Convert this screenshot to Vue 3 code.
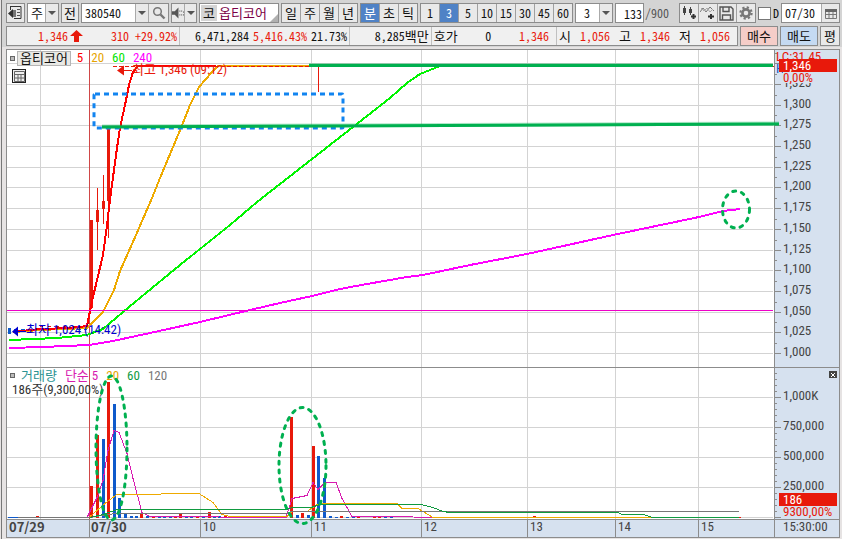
<script setup>
import { ref } from 'vue'

const periods = ['일', '주', '월', '년']
const units = ['분', '초', '틱']
const minutes = ['1', '3', '5', '10', '15', '30', '45', '60']
const unit = ref('분')
const minute = ref('3')
const code = ref('380540')
const count = ref('133')
const date = ref('07/30')
const drawMode = ref(false)

// Plot coordinates: one unit is one pixel of the default window.
const X0 = 7
const PLOT_W = 767
const PRICE_TOP = 50
const PRICE_H = 317
const VOL_TOP = 368
const VOL_H = 151

const hours = [
  { x: 40, label: '' },
  { x: 200, label: '10' },
  { x: 311, label: '11' },
  { x: 421, label: '12' },
  { x: 527, label: '13' },
  { x: 615, label: '14' },
  { x: 698, label: '15' }
]
const priceTicks = [
  [63, ''], [84, '1,325'], [105, '1,300'], [125, '1,275'], [146, '1,250'],
  [167, '1,225'], [187, '1,200'], [208, '1,175'], [229, '1,150'], [250, '1,125'],
  [270, '1,100'], [291, '1,075'], [312, '1,050'], [332, '1,025'], [353, '1,000']
].map(([y, label]) => ({ y, label }))
const volTicks = [
  [397, '1,000K'], [427, '750,000'], [457, '500,000'], [487, '250,000'], [517, '']
].map(([y, label]) => ({ y, label }))
const volMinor = Array.from({ length: 24 }, (_, i) => 373 + i * 6)

const priceLines = [
  { c: '#ff00ff', w: 2, p: '9,348 43,347 89,345 113,341 150,333 200,322 250,310 280,303 312,296 340,289 367,284 407,277 423,275 470,265 527,254 613,235 699,217 723,211 740,209' },
  { c: '#00f400', w: 2, p: '9,340 57,338 87,335 103,329 123,312 152,288 180,265 200,249 230,225 257,202 312,159 353,127 390,98 407,83 420,74 440,66' },
  { c: '#eeaa00', w: 2, p: '13,332 40,330 87,328 90,325 103,312 114,290 120,271 136,235 152,198 160,178 173,147 183,123 190,105 199,87 212,72 218,66 312,66' },
  { c: '#ff0000', w: 2, p: '13,332 40,329 70,328 87,326 90,311 93,297 103,255 107,225 111,192 117,148 120,128 125,105 129,85 133,72 138,66 216,66' }
]
const candles = [
  { x: 90, top: 220, bottom: 308, high: 220, low: 308 },
  { x: 96, top: 210, bottom: 222, high: 188, low: 250 },
  { x: 102, top: 201, bottom: 209, high: 175, low: 224 },
  { x: 107, top: 128, bottom: 201, high: 128, low: 238 }
]
const UP = '#e8190b'
const DOWN = '#0f5acb'
const bars = [
  [36, 516, UP], [90, 486, UP], [96, 435, UP], [102, 439, DOWN], [107, 382, UP], [113, 404, DOWN],
  [118, 498, DOWN], [124, 514, DOWN], [130, 516, DOWN], [135, 516, DOWN], [140, 514, UP],
  [146, 516, DOWN], [152, 516, UP], [158, 516, DOWN], [163, 516, DOWN], [169, 516, DOWN],
  [174, 516, UP], [179, 514, UP], [185, 516, DOWN], [190, 516, DOWN], [196, 516, UP],
  [202, 516, DOWN], [208, 512, UP], [213, 516, DOWN], [218, 516, DOWN], [224, 516, UP],
  [290, 417, UP], [296, 515, DOWN], [301, 513, UP], [307, 515, DOWN], [312, 446, UP],
  [317, 456, DOWN], [323, 478, DOWN], [329, 516, DOWN], [335, 517, DOWN], [340, 516, UP],
  [346, 517, DOWN], [352, 517, DOWN], [357, 516, UP], [373, 516, UP], [378, 516, UP],
  [384, 516, DOWN], [390, 517, DOWN], [533, 516, UP]
].map(([x, y, c]) => ({ x, y, c }))
const volLines = [
  { c: '#d81bb0', p: '87,517 97,497 103,480 108,450 114,430 119,432 127,453 133,478 142,512 150,516 286,517 292,498 307,495 313,482 318,489 325,482 336,482 342,498 352,516 393,516 433,517' },
  { c: '#eeaa00', p: '90,516 105,503 117,494 160,494 162,493 199,493 213,502 222,514 230,516 287,516 292,511 307,511 317,504 325,503 397,503 402,508 418,508 433,517 655,517' },
  { c: '#777777', p: '8,517 90,517 115,513 285,513 292,511 739,511' },
  { c: '#0f9a3f', p: '90,517 103,514 117,509 287,509 292,507 311,507 320,504 421,504 433,507 443,511 450,512 618,512 622,514 643,514 653,517 740,517' }
]

const pct = (v, start, size) => ((v - start) / size) * 100 + '%'
const priceY = y => ({ top: pct(y, PRICE_TOP, PRICE_H) })
const volY = y => ({ top: pct(y, VOL_TOP, VOL_H) })
const timeX = x => ({ left: pct(x, X0, PLOT_W) })
</script>

<template>
  <div class="app">
    <header class="toolbar">
      <button class="btn fold" aria-label="패널 접기">
        <svg width="15" height="14" viewBox="0 0 15 14">
          <path d="M2 .5h11v12H6M2.500 1v3" fill="none" stroke="#333" />
          <path d="M9 3h3v1H9zM9 6h3v1H9zM9 9h3v1H9z" fill="#555" />
          <path d="M5 3v9L0 7.500z" fill="#333" /><path d="M5 4h3v7H5z" fill="#777" />
        </svg>
      </button>
      <div class="combo kind">
        <select aria-label="종목 구분"><option>주</option></select><i class="caret"></i>
      </div>
      <button class="btn">전</button>
      <div class="combo code">
        <input v-model="code" class="num" aria-label="종목코드" />
        <button class="caret" aria-label="종목코드 목록"></button>
        <button class="find" aria-label="종목 검색">
          <svg width="14" height="14" viewBox="0 0 14 14" fill="none" stroke="#777">
            <circle cx="5.500" cy="5.500" r="3.800" stroke-width="1.500" /><path d="M8.500 8.500l4 4" stroke-width="2.400" />
          </svg>
        </button>
      </div>
      <div class="combo sound">
        <button aria-label="음성">
          <svg width="12" height="12" viewBox="0 0 13 12">
            <path d="M0 4h3l4-4v12L3 8H0z" fill="#555" />
            <path d="M8 3h1v2H8zM8 7h1v2H8zM10 3h1v2h-1zM10 7h1v2h-1zM12 4h1v2h-1zM12 7h1v2h-1z" fill="#888" />
          </svg>
        </button>
        <button class="caret" aria-label="음성 설정"></button>
      </div>
      <div class="stock"><span class="market">코</span><span>옵티코어</span></div>
      <div class="group">
        <button v-for="p in periods" :key="p">{{ p }}</button>
      </div>
      <div class="group">
        <button v-for="u in units" :key="u" :class="{ on: unit === u }" @click="unit = u">{{ u }}</button>
      </div>
      <div class="group num">
        <button v-for="m in minutes" :key="m" :class="{ on: minute === m }" @click="minute = m">{{ m }}</button>
      </div>
      <div class="combo step">
        <select class="num" aria-label="분 간격"><option>3</option></select><i class="caret"></i>
      </div>
      <div class="count num">
        <input v-model="count" aria-label="조회 개수" /><span>/900</span>
      </div>
      <div class="group tools">
        <button aria-label="종목 추가">
          <svg width="16" height="14" viewBox="0 0 16 14">
            <path d="M3.500 0v9M9.500 1v8" stroke="#444" /><path d="M2 2h3v5H2zM8 3h3v4H8z" fill="#444" />
            <path d="M10 10.500h5M12.500 8v5" stroke="#333" stroke-width="2" />
          </svg>
        </button>
        <button aria-label="지표 추가">
          <svg width="16" height="14" viewBox="0 0 16 14" fill="none">
            <path d="M0 6l3-4 3 4 4-5 4 4" stroke="#777" /><path d="M1 2l3 3 3-3 3 4 3-3" stroke="#aaa" />
            <path d="M8 10.500h6M11 8v5" stroke="#333" stroke-width="2" />
          </svg>
        </button>
        <button aria-label="저장">
          <svg width="15" height="15" viewBox="0 0 15 15" fill="none" stroke="#555" stroke-width="1.400">
            <path d="M1 1h11l2 2v11H1zM4 1v4.500h6V1M3.500 14V9h8v5" />
          </svg>
        </button>
        <button aria-label="설정">
          <svg width="14" height="14" viewBox="0 0 14 14" fill="none" stroke="#777">
            <circle cx="7" cy="7" r="3.600" stroke-width="2.600" />
            <circle cx="7" cy="7" r="5.600" stroke-width="2.200" stroke-dasharray="2.200 2.200" />
          </svg>
        </button>
      </div>
      <label class="day num"><input v-model="drawMode" type="checkbox" />D</label>
      <div class="combo date">
        <input v-model="date" class="num" aria-label="날짜" />
        <button aria-label="달력">
          <svg width="12" height="11" viewBox="0 0 12 11">
            <path d="M.5 2v8.500h11V2M.5 6.500h11M4 4v6M8 4v6" fill="none" stroke="#777" />
            <path d="M0 1h12v3H0z" fill="#666" />
          </svg>
        </button>
      </div>
    </header>

    <section class="quote">
      <div class="cells num">
        <div class="cell up">
          <span>1,346</span>
          <svg class="arrow" width="13" height="12" viewBox="0 0 13 12"><path d="M6.500 0L13 6H9v6H4V6H0z" fill="#e8190b" /></svg>
          <span class="diff">310</span><span class="rate">+29.92%</span>
        </div>
        <div class="cell"><span>6,471,284</span><span class="up">5,416.43%</span><span>21.73%</span></div>
        <div class="cell"><span>8,285<b>백만</b></span></div>
        <div class="cell spread"><b>호가</b><span>0</span><span class="up">1,346</span></div>
        <div class="cell spread">
          <b>시</b><span class="up">1,056</span><b>고</b><span class="up">1,346</span><b>저</b><span class="up">1,056</span>
        </div>
      </div>
      <button class="trade buy">매수</button>
      <button class="trade sell">매도</button>
      <button class="trade avg">평</button>
    </section>

    <main class="chart">
      <section class="pane price">
        <svg class="plot" :viewBox="`${X0} ${PRICE_TOP} ${PLOT_W} ${PRICE_H}`" preserveAspectRatio="none">
          <g fill="#d3d3d3">
            <rect v-for="t in priceTicks" :key="t.y" x="7" :y="t.y" width="766" height="1" />
            <rect v-for="h in hours" :key="h.x" :x="h.x" y="50" width="1" height="317" />
          </g>
          <rect x="89" y="50" width="1" height="317" fill="#d04848" />
          <g fill="#e8190b">
            <template v-for="c in candles" :key="c.x">
              <rect :x="c.x" :y="c.top" width="3" :height="c.bottom - c.top" />
              <rect :x="c.x + 1" :y="c.high" width="1" :height="c.low - c.high" />
            </template>
            <rect x="318" y="66" width="1" height="26" />
          </g>
          <g shape-rendering="crispEdges" fill="none">
            <path d="M14 329.500H87" stroke="#0f5acb" stroke-dasharray="4 3" />
            <path d="M40 326.500H87" stroke="#e8190b" stroke-dasharray="3 5" />
            <polyline v-for="l in priceLines" :key="l.c" :points="l.p" :stroke="l.c" :stroke-width="l.w" />
            <path d="M113 66.500H774" stroke="#e8190b" stroke-dasharray="4 2" />
            <path d="M7 310.500H773" stroke="#ee00c8" />
          </g>
          <path d="M8 328h3v6H8z" fill="#0f5acb" />
          <path d="M117 70.500l7-5v10zM124 70h8v1h-8z" fill="#e8190b" />
          <path d="M12 331.500l6-5v10zM18 331h8v1h-8z" fill="#0000d0" />
        </svg>
        <div class="legend">
          <i class="dot"></i><button class="title">옵티코어</button>
          <span class="c5">5</span><span class="c20">20</span><span class="c60">60</span><span class="c240">240</span>
        </div>
        <button class="grid-btn" aria-label="표 보기">
          <svg width="11" height="11" viewBox="0 0 11 11" fill="none" stroke="#666"><path d="M.5.5h10v10H.5zM.5 3.500h10M.5 7h10M4 3v8M7 3v8" /></svg>
        </button>
        <span class="mark high" :style="{ ...priceY(70), ...timeX(132) }">최고 1,346 (09:12)</span>
        <span class="mark low" :style="{ ...priceY(330), ...timeX(26) }">최저 1,024 (14:42)</span>
      </section>

      <aside class="axis">
        <svg class="plot" :viewBox="`775 ${PRICE_TOP} 64 ${PRICE_H}`" preserveAspectRatio="none" fill="#8c8c8c">
          <template v-for="t in priceTicks" :key="t.y">
            <rect x="775" :y="t.y" width="6" height="1" /><rect x="775" :y="t.y - 10" width="2" height="1" />
          </template>
        </svg>
        <span class="tick up edge" :style="priceY(57)">LC:31.45</span>
        <span class="tick limit edge" :style="priceY(69)">H</span>
        <span v-for="t in priceTicks" :key="t.y" class="tick" :style="priceY(t.y - 1)">{{ t.label }}</span>
        <span class="tick up change" :style="priceY(78)">0,00%</span>
        <span class="now" :style="priceY(66)">1,346</span>
      </aside>

      <section class="pane volume">
        <svg class="plot" :viewBox="`${X0} ${VOL_TOP} ${PLOT_W} ${VOL_H}`" preserveAspectRatio="none">
          <g fill="#d3d3d3">
            <rect v-for="t in volTicks" :key="t.y" x="7" :y="t.y" width="766" height="1" />
            <rect v-for="h in hours" :key="h.x" :x="h.x" y="368" width="1" height="151" />
          </g>
          <rect x="89" y="368" width="1" height="151" fill="#d04848" />
          <rect v-for="b in bars" :key="b.x" :x="b.x" :y="b.y" width="3" :height="518 - b.y" :fill="b.c" />
          <g shape-rendering="crispEdges" fill="none" transform="translate(0 .5)">
            <polyline v-for="l in volLines" :key="l.c" :points="l.p" :stroke="l.c" />
            <path d="M8 517H18" stroke="#0f5acb" />
            <path d="M739 517H741" stroke="#e8190b" />
          </g>
        </svg>
        <div class="legend">
          <i class="dot"></i><span class="vol">거래량</span>
          <span class="m5">단순 5</span><span class="c20">20</span><span class="m60">60</span><span class="m120">120</span>
        </div>
        <p class="volume-now">186주(9,300,00%)</p>
      </section>

      <aside class="axis lower">
        <svg class="plot" :viewBox="`775 ${VOL_TOP} 64 ${VOL_H}`" preserveAspectRatio="none" fill="#8c8c8c">
          <rect v-for="t in volTicks" :key="t.y" x="775" :y="t.y" width="6" height="1" />
          <rect v-for="y in volMinor" :key="y" x="775" :y="y" width="2" height="1" />
        </svg>
        <span v-for="t in volTicks" :key="t.y" class="tick" :style="volY(t.y - 1)">{{ t.label }}</span>
        <span class="tick up" :style="volY(512)">9300,00%</span>
        <span class="now" :style="volY(500)">186</span>
        <button class="close" aria-label="닫기">
          <svg width="4" height="4" viewBox="0 0 4 4" stroke="#fff"><path d="M0 0l4 4M4 0L0 4" /></svg>
        </button>
      </aside>

      <footer class="times">
        <span class="time day-start first" :style="timeX(7)">07/29</span>
        <span class="time day-start" :style="timeX(89)">07/30</span>
        <span v-for="h in hours.slice(1)" :key="h.x" class="time" :style="timeX(h.x)">{{ h.label }}</span>
      </footer>
      <div class="clock">15:30:00</div>

      <svg class="notes" viewBox="7 50 832 487" preserveAspectRatio="none" fill="none">
        <path d="M309 65H773M102 126.500L779 123.500" stroke="#00b050" stroke-opacity=".3" stroke-width="4" />
        <rect x="94" y="94" width="249" height="34" stroke="#1184f0" stroke-width="3" stroke-dasharray="5 4" rx="1" />
        <path d="M309 65.500H773M102 127L779 124" stroke="#00b050" stroke-width="3" />
        <g stroke="#00b050" stroke-width="3" stroke-linecap="round" stroke-dasharray="3 6">
          <ellipse cx="111.500" cy="448" rx="15.500" ry="72" />
          <ellipse cx="302.500" cy="465.500" rx="23.500" ry="58" />
          <ellipse cx="736" cy="209.500" rx="13.500" ry="18.500" />
        </g>
      </svg>
    </main>
  </div>
</template>

<style>
body {
  margin: 0;
  background: #e6e3e3;
}
</style>

<style scoped>
.app {
  --line: #8c8c8c;
  --up: #e8190b;
  --axis: #d6e1ef;
  box-sizing: border-box;
  display: flex;
  flex-direction: column;
  gap: 3px;
  height: 100vh;
  min-height: 420px;
  min-width: 840px;
  margin-left: 1px;
  padding: 3px 2px 1px 4px;
  border-left: 1px solid #777;
  background: linear-gradient(#d4d4d4 47px, #e6e3e3 47px);
  font-family: 'Noto Sans CJK KR', sans-serif;
  font-size: 13px;
  line-height: 18px;
  color: #111;
}
.app *,
.app *::before,
.app *::after {
  box-sizing: border-box;
}
button,
input,
select {
  margin: 0;
  padding: 0;
  border: 0;
  border-radius: 0;
  background: none;
  font: inherit;
  color: inherit;
  outline: none;
}
svg {
  display: block;
}
b {
  font-size: 13px;
  font-weight: 400;
}
.num {
  font-size: 12px;
  font-feature-settings: 'hwid';
}
.up {
  color: var(--up);
}

/* toolbar */
.toolbar {
  display: flex;
  gap: 2px;
  height: 20px;
}
.btn,
.combo,
.group,
.stock {
  display: flex;
  flex: none;
  height: 20px;
  border: 1px solid var(--line);
  background: #e9e9e9;
}
.btn {
  width: 18px;
  align-items: center;
  justify-content: center;
}
.fold { width: 19px; }
.combo input,
.combo select {
  flex: 1;
  min-width: 0;
  padding-left: 3px;
  background: #fff;
  appearance: none;
}
.combo button {
  display: flex;
  align-items: center;
  justify-content: center;
  border-left: 1px solid #aaa;
}
.combo button:first-child {
  flex: 1;
  border-left: 0;
}
.caret {
  position: relative;
  flex: none;
  width: 13px;
  border-left: 1px solid #aaa;
}
.caret::after {
  content: '';
  position: absolute;
  top: 7px;
  left: 2px;
  border: 4px solid transparent;
  border-top-color: #555;
  border-bottom: 0;
}
.kind { width: 32px; }
.code { width: 88px; }
.find { width: 20px; }
.sound { width: 26px; }
.step { width: 38px; }
.step select { padding-left: 8px; }
.date { width: 59px; }
.date button { width: 18px; }
.stock {
  position: relative;
  gap: 2px;
  width: 80px;
  padding: 1px;
  background: #fff;
  color: #7a0046;
  line-height: 16px;
}
.stock::after {
  content: '';
  position: absolute;
  right: 0;
  bottom: 0;
  border: 4px solid #b0b0b0;
  border-top-color: transparent;
  border-left-color: transparent;
}
.market {
  width: 16px;
  background: #d4d4d4;
  color: #111;
  text-align: center;
}
.group button {
  display: flex;
  align-items: center;
  justify-content: center;
  width: 19px;
  border-left: 1px solid #a0a0a0;
}
.group button:first-child {
  width: 18px;
  border-left: 0;
}
.group .on {
  background: #4f82c6;
  color: #fff;
}
.count {
  display: flex;
  flex: 1;
}
.count input {
  width: 29px;
  height: 20px;
  padding-right: 1px;
  border: 1px solid var(--line);
  background: #fff;
  text-align: right;
}
.count span {
  padding: 1px;
  color: #555;
}
.day {
  display: flex;
  align-items: center;
  gap: 2px;
}
.day input {
  width: 13px;
  height: 13px;
  border: 1px solid #777;
  background: #fff;
  appearance: none;
}
.day input:checked {
  background: #4f82c6;
}

/* quote strip */
.quote {
  display: flex;
  gap: 2px;
  height: 20px;
}
.cells {
  display: grid;
  flex: 1;
  grid-template-columns: 173fr 171fr 82fr 126fr 182fr;
  border: 1px solid var(--line);
  background: #f0f0f0;
}
.cell {
  display: flex;
  align-items: center;
  justify-content: flex-end;
  gap: 4px;
  min-width: 0;
  padding-right: 2px;
  border-left: 1px solid #c0c0c0;
  white-space: nowrap;
}
.cell:first-child {
  gap: 2px;
  border-left: 0;
}
.diff { margin-left: 26px; }
.rate { margin-left: 4px; }
.spread {
  justify-content: space-between;
  padding: 0 7px 0 2px;
}
.trade {
  width: 38px;
  border: 1px solid var(--line);
  background: #e9e9e9;
}
.buy { background: #f5cdc8; }
.sell { background: #c5daf2; }
.avg { width: 20px; }

/* chart */
.chart {
  position: relative;
  display: grid;
  flex: 1;
  grid-template: minmax(0, 317fr) minmax(0, 152fr) minmax(0, 18fr) / minmax(0, 767fr) minmax(0, 65fr);
  border: 1px solid var(--line);
  background: #fff;
  font-family: 'Roboto Condensed', 'Noto Sans CJK KR', sans-serif;
  line-height: 14px;
}
.pane,
.axis {
  position: relative;
  overflow: hidden;
}
.volume,
.lower {
  border-top: 1px solid var(--line);
}
.axis,
.clock {
  border-left: 1px solid var(--line);
  background: var(--axis);
  color: #444;
}
.plot,
.notes {
  position: absolute;
  inset: 0;
  width: 100%;
  height: 100%;
}
.notes {
  pointer-events: none;
}
.legend {
  position: relative;
  display: flex;
  align-items: center;
  gap: 8px;
  height: 16px;
  padding: 1px 3px;
}
.dot {
  width: 5px;
  height: 5px;
  border: 1px solid #666;
  background: #bbb;
}
.title {
  height: 15px;
  margin: 0 -2px 0 -6px;
  padding: 0 2px;
  border: 1px solid #b5b5b5;
  background: #e9e9e5;
}
.c5 { color: #f00; }
.c20 { color: #e6a400; }
.c60 { color: #00e400; }
.c240 { color: #f0f; }
.vol { margin-left: -2px; color: #2a9393; }
.m5 { color: #d81bb0; }
.m60 { color: #0f9a3f; }
.m120 { color: #777; }
.volume .legend { height: 15px; }
.volume-now {
  position: relative;
  margin: 0;
  padding-left: 5px;
  color: #333;
}
.grid-btn {
  position: relative;
  display: grid;
  place-items: center;
  width: 14px;
  height: 14px;
  margin: 3px 5px;
  border: 1px solid #222;
  background: #eee;
}
.mark,
.tick,
.now {
  position: absolute;
  height: 14px;
  margin-top: -7px;
  white-space: nowrap;
}
.high { color: var(--up); }
.low { color: #0000d0; }
.tick { left: 8px; }
.edge { left: 1px; }
.tick.up { color: var(--up); }
.tick.limit { color: #0f5acb; }
.change {
  height: 12px;
  padding-right: 8px;
  background: var(--axis);
}
.now {
  left: 4px;
  right: 2px;
  height: 13px;
  padding-left: 4px;
  background: var(--up);
  color: #fff;
  line-height: 13px;
}
.close {
  position: absolute;
  top: 3px;
  right: 2px;
  display: grid;
  place-items: center;
  width: 8px;
  height: 7px;
  background: #444;
}
.times {
  position: relative;
  border-top: 1px solid var(--line);
  background: var(--axis);
  color: #444;
}
.time {
  position: absolute;
  height: 100%;
  padding-left: 2px;
  border-left: 1px solid var(--line);
}
.day-start {
  padding-left: 1px;
  font-family: 'Noto Sans CJK KR', sans-serif;
  font-weight: 700;
}
.first { border-left-color: transparent; }
.clock {
  padding-left: 8px;
  border-top: 1px solid var(--line);
}
</style>
